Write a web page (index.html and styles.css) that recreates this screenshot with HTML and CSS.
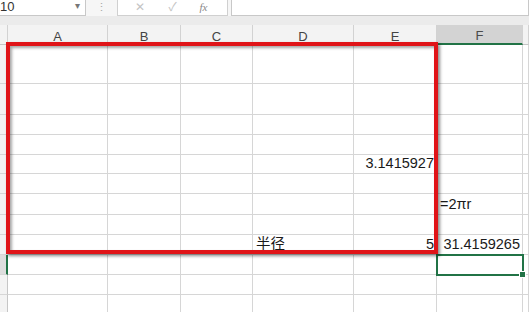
FILE: index.html
```html
<!DOCTYPE html>
<html lang="zh-CN">
<head>
  <meta charset="UTF-8">
  <title>Sheet1</title>
  <link rel="stylesheet" href="styles.css">
</head>
<body>

  <div class="toolbar">
    <div class="name-box">
      <span class="name">10</span>
      <span class="caret">&#9662;</span>
    </div>
    <div class="dots">&#8942;</div>
    <div class="fx-buttons">
      <span class="fx-btn">&#10005;</span>
      <span class="fx-btn">&#10003;</span>
      <span class="fx-btn fx">fx</span>
    </div>
    <div class="formula"></div>
  </div>

  <div class="strip"></div>

  <div class="sheet">
    <div class="grid" id="grid"></div>

    <!-- annotation box -->
    <div class="mark"></div>
  </div>

  <script>
    const cols = ["", "A", "B", "C", "D", "E", "F", ""];
    const heights = [39, 31, 20, 20, 19, 20, 21, 20, 20, 20, 20, 20];
    const data = {
      "4-5": { text: "3.1415927", cls: "num" },
      "6-6": { text: "=2\u03c0r" },
      "8-4": { text: "半径" },
      "8-5": { text: "5", cls: "num" },
      "8-6": { text: "31.4159265", cls: "num" }
    };

    const grid = document.getElementById("grid");
    grid.style.gridTemplateRows = "20px " + heights.map(h => h + "px").join(" ");

    cols.forEach((c, i) => {
      const cell = document.createElement("div");
      cell.className = "col-head" + (i === 0 ? " corner" : "") + (c === "F" ? " active" : "");
      cell.textContent = c;
      grid.appendChild(cell);
    });

    heights.forEach((h, r) => {
      cols.forEach((c, i) => {
        const cell = document.createElement("div");
        if (i === 0) {
          cell.className = "row-head" + (r === 9 ? " active" : "");
        } else {
          const d = data[r + "-" + i];
          cell.className = "cell" + (d && d.cls ? " " + d.cls : "") + (r === 9 && i === 6 ? " selected" : "");
          if (d) cell.textContent = d.text;
        }
        grid.appendChild(cell);
      });
    });
  </script>

</body>
</html>
```

FILE: styles.css
```css
body {
  margin: 0;
  width: 529px;
  height: 312px;
  overflow: hidden;
  background: #fff;
  font-family: "Liberation Sans", "Noto Sans CJK SC", sans-serif;
}
.toolbar {
  display: flex;
  height: 16px;
  background: #f6f6f6;
}
.name-box {
  display: flex;
  justify-content: space-between;
  width: 86px;
  height: 16px;
  box-sizing: border-box;
  background: #fff;
  border: 1px solid #c8c8c8;
  border-top: none;
  border-left: none;
  padding: 0 5px 0 0;
  font-size: 13px;
  line-height: 14px;
  color: #333;
}
.caret {
  font-size: 10px;
  line-height: 12px;
  color: #777;
}
.dots {
  width: 31px;
  text-align: center;
  font-size: 11px;
  line-height: 15px;
  color: #a8a8a8;
}
.fx-buttons {
  display: flex;
  justify-content: space-around;
  align-items: flex-start;
  width: 111px;
  height: 16px;
  box-sizing: border-box;
  background: #fff;
  border: 1px solid #d0d0d0;
  border-top: none;
  padding: 0 8px 0 6px;
}
.fx-btn {
  font-size: 12px;
  line-height: 14px;
  color: #c4c4c4;
}
.fx {
  font-family: "Liberation Serif", serif;
  font-style: italic;
  font-size: 11px;
  color: #888;
}
.formula {
  flex: 1;
  height: 16px;
  margin-left: 3px;
  box-sizing: border-box;
  background: #fff;
  border: 1px solid #c8c8c8;
  border-top: none;
}
.strip {
  height: 9px;
  background: #ebebeb;
}

.sheet {
  position: relative;
}
.grid {
  display: grid;
  grid-template-columns: 8px 100px 73px 72px 101px 83px 86px 1fr;
}
.grid > div {
  box-sizing: border-box;
  border-right: 1px solid #d6d6d6;
  border-bottom: 1px solid #d6d6d6;
  white-space: nowrap;
}
.col-head {
  background: #f3f3f3;
  text-align: center;
  font-size: 13px;
  line-height: 23px;
  color: #444;
  border-right-color: #d2d2d2 !important;
  border-bottom-color: #c6c6c6 !important;
}
.col-head.active {
  background: #d3d3d3;
  color: #4a4a4a;
  border-bottom: 2px solid #217346 !important;
  line-height: 22px;
}
.row-head {
  background: #f3f3f3;
  border-right-color: #c6c6c6 !important;
}
.row-head.active {
  background: #dedede;
  border-right: 2px solid #217346 !important;
}
.cell {
  font-size: 14.5px;
  color: #1a1a1a;
  padding: 0 2px 0 3px;
  display: flex;
  align-items: flex-end;
  line-height: 19px;
}
.cell.num {
  justify-content: flex-end;
}
.cell.selected {
  position: relative;
  outline: 2px solid #217346;
  outline-offset: -1px;
}
.cell.selected::after {
  content: "";
  position: absolute;
  right: -4px;
  bottom: -4px;
  width: 5px;
  height: 5px;
  background: #217346;
  border: 1px solid #fff;
}

.mark {
  position: absolute;
  left: 6px;
  top: 17px;
  width: 424px;
  height: 204px;
  border: 4px solid #e01418;
  box-shadow: 2px 2px 3px rgba(0, 0, 0, 0.45), inset 2px 2px 3px rgba(0, 0, 0, 0.35);
  pointer-events: none;
}
```
